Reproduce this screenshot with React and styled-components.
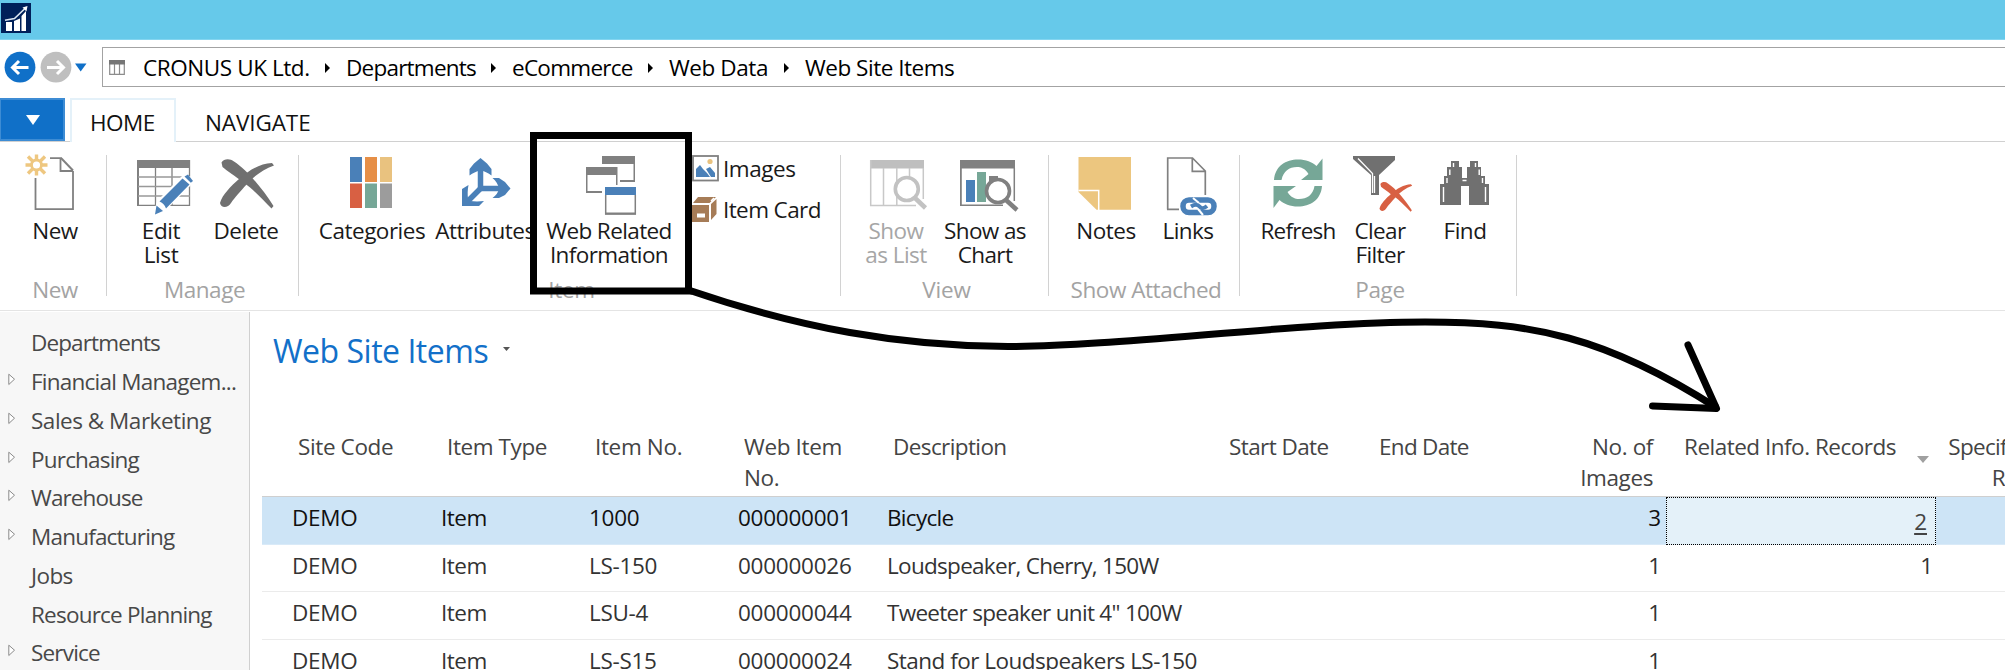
import React from "react";
import styled, { createGlobalStyle } from "styled-components";

const GlobalStyle = createGlobalStyle`
  *, *::before, *::after { box-sizing: border-box; }
  body { margin: 0; overflow: hidden; background: #fff; }
`;

const Window = styled.div`
  position: relative;
  width: 2005px;
  height: 670px;
  overflow: hidden;
  display: flex;
  flex-direction: column;
  background: #fff;
  color: #1a1a1a;
  font: 22.5px/24px "Open Sans", "Noto Sans", sans-serif;
  white-space: nowrap;
`;

const Text = styled.span`
  letter-spacing: ${(p) => p.$ls ?? -0.5}px;
`;

/* ---------- title and navigation bars ---------- */

const TitleBar = styled.header`
  height: 40px;
  flex: none;
  padding: 3px 1px;
  background: #66c9ea;
  border-bottom: 1px solid #84d5f0;
`;

const NavBar = styled.nav`
  height: 58px;
  flex: none;
  display: flex;
  align-items: flex-start;
  padding-top: 7px;
`;

const NavButtons = styled.div`
  width: 102px;
  height: 40px;
  display: flex;
`;

const AddressBox = styled.div`
  flex: 1;
  height: 40px;
  display: flex;
  align-items: center;
  border: 1.5px solid #a3a3a3;
  border-right: 0;
  padding: 2px 0 0 6px;
  color: #000;
  > svg { margin-top: -1px; }
`;

const Crumb = styled.div`
  width: ${(p) => p.$w}px;
  display: flex;
  align-items: center;
  justify-content: space-between;
  padding-right: 16px;
`;

const CrumbGap = styled.span`
  width: 18px;
`;

/* ---------- ribbon ---------- */

const TabRow = styled.div`
  height: 44px;
  flex: none;
  display: flex;
  border-bottom: 1px solid #d0d0d0;
`;

const FileTab = styled.div`
  width: 65px;
  height: 43px;
  display: flex;
  align-items: center;
  justify-content: center;
  padding: 1px 0 0 2px;
  background: #1070c8;
  border: 2px solid #3d8cd4;
  border-left-width: 1px;
`;

const Tab = styled.div`
  width: ${(p) => p.$w}px;
  height: ${(p) => (p.$active ? 44 : 43)}px;
  margin-left: ${(p) => p.$gap}px;
  padding: 11px 0 0 18px;
  background: #fff;
  border: 2px solid ${(p) => (p.$active ? "#e4f1f9" : "transparent")};
  border-bottom: 0;
  color: #111;
`;

const Ribbon = styled.div`
  height: 169px;
  flex: none;
  display: flex;
  border-bottom: 1px solid #e4e4e4;
`;

const Group = styled.section`
  width: ${(p) => p.$w}px;
  height: 154px;
  display: flex;
  flex-direction: column;
  justify-content: space-between;
  background: linear-gradient(#d2d2d2, #d2d2d2) right 13px / 1px 141px no-repeat;
`;

const GroupBody = styled.div`
  display: flex;
  padding: 8px 0 0 ${(p) => p.$pad}px;
`;

const Caption = styled.div`
  height: 24px;
  margin-bottom: -6px;
  padding-left: 3px;
  text-align: center;
  color: #a3a3a3;
`;

const BigButton = styled.div`
  width: ${(p) => p.$w}px;
  display: flex;
  flex-direction: column;
  align-items: center;
  color: ${(p) => (p.$disabled ? "#a6a6a6" : "#1a1a1a")};
  svg { display: block; flex: none; overflow: visible; margin-bottom: 1px; }
`;

const SmallList = styled.div`
  margin: -3px 0 0 11px;
  display: flex;
  flex-direction: column;
`;

const SmallButton = styled.div`
  height: 41px;
  display: flex;
  align-items: center;
  gap: 4px;
  padding-top: 2px;
  svg { display: block; margin-top: -1px; }
`;

/* ---------- body ---------- */

const Body = styled.div`
  flex: 1;
  display: flex;
  min-height: 0;
`;

const Sidebar = styled.aside`
  width: 250px;
  flex: none;
  padding-top: 12px;
  margin-top: 1px;
  overflow: hidden;
  background: #f7f7f7;
  border-right: 1px solid #d0d0d0;
  color: #484848;
`;

const SideRow = styled.div`
  height: 38.75px;
  display: flex;
  align-items: center;
`;

const Twisty = styled.span`
  width: 31px;
  height: 14px;
  padding-left: 8px;
  margin-top: -4px;
  svg { display: block; }
`;

const Main = styled.main`
  flex: 1;
  min-width: 0;
  overflow: hidden;
  padding-left: 12px;
`;

const PageTitle = styled.h1`
  margin: 0;
  height: 120px;
  padding: 20px 0 0 11px;
  display: flex;
  gap: 15px;
  font-size: 32px;
  font-weight: 400;
  line-height: 40px;
  color: #1270c9;
  svg { margin-top: 16px; }
`;

const columns = "25px 149px 148px 149px 149px 336px 150px 149px 149px 270px 149px";

const HeaderRow = styled.div`
  display: grid;
  grid-template-columns: ${columns};
  height: 66px;
  border-bottom: 1px solid #cfcfcf;
  line-height: 31px;
  color: #444;
`;

const HeadCell = styled.div`
  display: flex;
  flex-direction: column;
  align-items: ${(p) => (p.$right ? "flex-end" : "flex-start")};
  padding: 0 ${(p) => (p.$right ? 13 : 0)}px 0 ${(p) => (p.$right ? 0 : 11)}px;
`;

const SortedHead = styled.div`
  display: flex;
  justify-content: space-between;
  padding: 0 7px 0 18px;
  svg { margin-top: 25px; }
`;

const Row = styled.div`
  display: grid;
  grid-template-columns: ${columns};
  height: 47.5px;
  background: ${(p) => (p.$selected ? "#cde4f6" : "#fff")};
  border-bottom: 1px solid ${(p) => (p.$selected ? "#d9eaf8" : "#ebebeb")};
  color: ${(p) => (p.$selected ? "#111" : "#333")};
  line-height: 42px;
`;

const Cell = styled.div`
  padding: 0 ${(p) => (p.$last ? 3 : 5)}px 0 5px;
  text-align: ${(p) => (p.$right ? "right" : "left")};
`;

const FocusCell = styled.div`
  height: 47.5px;
  padding: 3px 8px 0 0;
  text-align: right;
  color: #444;
  background: #e4f1f9;
  border: 1px dotted #000;
  text-decoration: underline;
  text-decoration-thickness: 1.5px;
  text-underline-offset: 3px;
`;

const Annotation = styled.svg`
  position: absolute;
  inset: 0;
  pointer-events: none;
`;

/* ---------- icons ---------- */

/* Icon canvases share the window's coordinate system; cx is the button centre. */
const Canvas = ({ cx, children }) => (
  <svg width="60" height="68" viewBox={`${cx - 30} 150 60 68`} fill="none">{children}</svg>
);

const GREY = "#808080";
const BLUE = "#4a80b8";

const NewIcon = () => (
  <Canvas cx={55}>
    <path d="M35.5 178V209.2H73V171M50 158.2H62" stroke={GREY} strokeWidth="1.8" />
    <path d="M60.5 158V171H73" stroke={GREY} strokeWidth="1.8" />
    <path d="M61.5 158.5L73 170.5" stroke={GREY} strokeWidth="2" />
    <circle cx="36.5" cy="165" r="5" stroke="#eec780" strokeWidth="2.8" />
    <path d="M36.5 154.5V159M36.5 171V175.5M25.5 165H31M42 165H47.5M28 156.5L32.5 161M45 156.5L40.5 161M28 173.5L32.5 169M45 173.5L40.5 169" stroke="#eec780" strokeWidth="3.4" />
  </Canvas>
);

const EditListIcon = () => (
  <Canvas cx={161}>
    <rect x="137" y="160" width="53" height="8" fill={GREY} />
    <path d="M138 160V206" stroke={GREY} strokeWidth="2" />
    <path d="M189.5 160V206M155.5 168V206M172 168V206M138 205.3H190" stroke={GREY} strokeWidth="1.3" />
    <path d="M138 177H190M138 186.5H190M138 196H190" stroke="#999" strokeWidth="1.3" />
    <path d="M153 216L157 201L184 174L194 178L193 183L165 211Z" fill="#fff" />
    <path d="M159.5 201.500L182.500 178.500L189.500 184.500L166 208.500C165 205 162 202.500 159.500 201.500Z" fill={BLUE} />
    <path d="M155 214.500L156.500 205.500L163 211Z" fill={BLUE} />
    <path d="M184.500 176.500L188 174.500L193 181L190.800 182.800Z" fill={BLUE} />
  </Canvas>
);

const Cross = ({ fill }) => (
  <g fill={fill}>
    <path d="M221.500 162.500C224 158.500 230 158.500 234 161.500C247 170 262 188 273.500 206L271.500 208.500C262 199 254 190 243 182C236 177 226 170 222.500 167Z" />
    <path d="M220 203C222 195 231 186 239 179C249 170 260 163.500 272 163L274 165.500C263 169.500 254 176 247 184C240 192 235 197 231 203C228 208 221 208.500 220 203Z" />
  </g>
);

const DeleteIcon = () => (
  <Canvas cx={246}><Cross fill="#707070" /></Canvas>
);

const CategoriesIcon = () => (
  <Canvas cx={372}>
    <rect x="350" y="157" width="12" height="25" fill={BLUE} />
    <rect x="365" y="157" width="12" height="25" fill="#e68f47" />
    <rect x="380" y="157" width="12" height="25" fill="#e9c27f" />
    <rect x="350" y="183.500" width="12" height="24.500" fill="#d86043" />
    <rect x="365" y="183.500" width="12" height="24.500" fill="#76a797" />
    <rect x="380" y="183.500" width="12" height="24.500" fill="#9c9c9c" />
  </Canvas>
);

const AttributesIcon = () => (
  <Canvas cx={485}>
    <path d="M480.500 189V166M478 188.500H502" stroke={BLUE} strokeWidth="5.500" />
    <path d="M480.500 188.500L468 201" stroke={BLUE} strokeWidth="5.500" />
    <path d="M480.500 158L487 163.500L491.500 169V175.500C488 173 485.500 171.500 480.500 170.500C476 171.500 473 173 469.500 175.500V169L474 163.500Z" fill={BLUE} />
    <path d="M510.500 188.500L505 182L499 178H492.500C496 181 498 184 499 188.500C498 193 496 195.500 492.500 198H499L505 195Z" fill={BLUE} />
    <path d="M462 206V189L468.500 185C467.500 190 467.500 194.500 468 198.500L470 201C474 201.500 480 201.500 484 201L479 206Z" fill={BLUE} />
  </Canvas>
);

const RelatedIcon = () => (
  <Canvas cx={609}>
    <path d="M602 156H635V182H620V180H633.500V164H602Z" fill={GREY} />
    <path d="M586 167H617.500V185H616V175H587.500V191H602V193H586Z" fill={GREY} />
    <path d="M605.700 195V214H635.300V195" stroke={GREY} strokeWidth="1.500" />
    <path d="M605 213.500H636" stroke={GREY} strokeWidth="2" />
    <rect x="605" y="187" width="31" height="8" fill={BLUE} />
  </Canvas>
);

const ShowListIcon = () => (
  <Canvas cx={896}>
    <rect x="870" y="160" width="54" height="8.500" fill="#bfbfbf" />
    <path d="M870.700 160V206M923.300 168V199M883.500 168V206M896.800 168V206M909.500 168V177M870 205.500H916" stroke="#c8c8c8" strokeWidth="1.500" />
    <circle cx="906.800" cy="189" r="11.500" fill="#fff" stroke="#c2c2c2" strokeWidth="3.600" />
    <path d="M915 198L925.500 208" stroke="#c2c2c2" strokeWidth="4.500" />
  </Canvas>
);

const ShowChartIcon = () => (
  <Canvas cx={985}>
    <rect x="960" y="160" width="55" height="8.500" fill={GREY} />
    <path d="M960.900 160V206" stroke={GREY} strokeWidth="1.800" />
    <path d="M1014.300 168V201M960 205.300H1003" stroke={GREY} strokeWidth="1.500" />
    <rect x="966" y="180" width="9" height="22" fill={BLUE} />
    <rect x="977" y="172" width="9" height="30" fill="#76a797" />
    <rect x="989" y="176" width="9" height="14" fill={GREY} />
    <circle cx="998" cy="191" r="11.500" fill="#fff" stroke={GREY} strokeWidth="3.600" />
    <path d="M1006 200L1017 210" stroke={GREY} strokeWidth="4.500" />
  </Canvas>
);

const NotesIcon = () => (
  <Canvas cx={1106}>
    <path d="M1078.500 157H1131V209.700H1096.500L1078.500 192Z" fill="#ecc67f" />
    <path d="M1078.500 190.500H1098.700V210" stroke="#fff" strokeWidth="1.500" />
  </Canvas>
);

const LinksIcon = () => (
  <Canvas cx={1188}>
    <path d="M1167.700 209.500V158H1192.500L1205.300 171V195M1192.300 158V171.300H1205M1167 209.300H1179" stroke={GREY} strokeWidth="1.700" />
    <rect x="1183" y="200" width="31" height="12.500" rx="6" stroke={BLUE} strokeWidth="5.500" />
    <path d="M1193 198L1199 203M1198 209L1203 215" stroke="#fff" strokeWidth="2" />
    <path d="M1191 206.500C1195 204 1197.500 204 1199.500 206.500S1204 208.500 1207 206" stroke={BLUE} strokeWidth="4" />
  </Canvas>
);

const RefreshIcon = () => (
  <Canvas cx={1298}>
    <path d="M1274 180C1275 166 1286 159.500 1298 159.500C1306 159.500 1312 162 1316.500 166L1322.500 158.500V180H1301L1308.500 174C1305 168.500 1301 167 1297 167C1289 167 1283.500 171 1281.500 180Z" fill="#76a797" />
    <path d="M1322 186C1321 200 1310 206.500 1298 206.500C1290 206.500 1284 204 1279.500 200L1273.500 208V186H1296L1287.500 192C1291 197.500 1295 199 1299 199C1307 199 1313 195 1314.500 186Z" fill="#76a797" />
  </Canvas>
);

const ClearFilterIcon = () => (
  <Canvas cx={1380}>
    <path d="M1353 156H1395V160L1379 175V195H1371V175L1353 159Z" fill="#707070" />
    <path d="M1358 158.500L1372.500 173.500V193M1374.500 176V193" stroke="#fff" strokeWidth="1.300" />
    <g transform="translate(1379.500 182.500) scale(.605) translate(-220 -160)"><Cross fill="#d86043" /></g>
  </Canvas>
);

const FindIcon = () => (
  <Canvas cx={1465}>
    <path d="M1440 205V184H1444V176H1447V167H1451V161H1459V167H1462V178H1467V167H1470V161H1478V167H1481V176H1485V184H1489V205H1469V186H1461V205Z" fill="#707070" />
    <path d="M1443.500 187V202M1447 178V183M1449.800 169.500V175M1453.500 163V167M1485.500 187V202M1482.500 178V183M1479.200 169.500V175M1475.500 163V167M1462.500 180.500H1466.500" stroke="#fff" strokeWidth="1.400" />
  </Canvas>
);

const ImagesIcon = () => (
  <svg width="27" height="27" viewBox="0 0 27 27">
    <rect x="1" y="1" width="25" height="24.500" fill="#fff" stroke={GREY} strokeWidth="1.800" />
    <circle cx="18" cy="6.500" r="2.600" fill="#e9c27f" />
    <path d="M4 22V14L8 10L11 14L15 18L18 22ZM14 14L18 12L23 18V22H19Z" fill={BLUE} />
  </svg>
);

const ItemCardIcon = () => (
  <svg width="27" height="27" viewBox="0 0 27 27">
    <path d="M0 9H17V26H0ZM1 7L6 1H24L17.500 7ZM19 8L24.500 3V18L19 24Z" fill="#a67c57" />
    <path d="M19 5L22 2" stroke="#fff" strokeWidth="1.500" />
    <rect x="5" y="17.500" width="8" height="4" fill="#fff" />
  </svg>
);

const Logo = () => (
  <svg width="30" height="30" viewBox="1 3 30 30" display="block">
    <rect x="1" y="3" width="30" height="30" fill="#00205a" />
    <path d="M6 22H12V31H6ZM14 21L20 18.500V31H14ZM21.500 16L26 11V31H21.500Z" fill="#fff" />
    <path d="M5 20.300L14.500 18.500L26 7.500" stroke="#dce6f2" strokeWidth="1.600" fill="none" />
    <path d="M22.500 7.500L27.500 6L26.500 11.500Z" fill="#fff" />
  </svg>
);

const NavIcons = () => (
  <svg width="102" height="40" viewBox="0 47 102 40" fill="none">
    <circle cx="20" cy="67.200" r="15.400" fill="#1070c8" />
    <circle cx="56" cy="67.200" r="15.400" fill="#bfbfbf" />
    <path d="M28.500 67.500H13.500M19 61L12.500 67.500L19 74M47 67.500H62.500M57 61L63.500 67.500L57 74" stroke="#fff" strokeWidth="3" />
    <path d="M75 63.500H86.500L80.700 71.500Z" fill="#1070c8" />
  </svg>
);

const PageIcon = () => (
  <svg width="16" height="15" viewBox="0 0 16 15">
    <path d="M.7 0V14.300H15.300V0M5.500 4V14M10.500 4V14" fill="none" stroke="#8c8c8c" strokeWidth="1.200" />
    <rect width="16" height="4.500" fill="#757575" />
  </svg>
);

const Triangle = ({ w, h, fill, right }) => (
  <svg width={w} height={h} viewBox="0 0 10 10" preserveAspectRatio="none">
    <path d={right ? "M0 0L10 5L0 10Z" : "M0 0H10L5 10Z"} fill={fill} />
  </svg>
);

/* ---------- data ---------- */

const crumbs = [
  ["CRONUS UK Ltd.", 203, -0.42],
  ["Departments", 166, -0.77],
  ["eCommerce", 157, -0.72],
  ["Web Data", 136, -0.42],
];

const groups = [
  { name: "New", w: 107, pad: 25, ls: -0.45, buttons: [[NewIcon, 60, ["New"], -0.45]] },
  { name: "Manage", w: 192, pad: 12, ls: -0.45, buttons: [[EditListIcon, 84, ["Edit", "List"], -0.4], [DeleteIcon, 86, ["Delete"], -0.5]] },
  {
    name: "Item", w: 542, pad: 12, ls: -0.3,
    buttons: [[CategoriesIcon, 122, ["Categories"], -0.5], [AttributesIcon, 104, ["Attributes"], -0.45], [RelatedIcon, 144, ["Web Related", "Information"], -0.6]],
    small: [[ImagesIcon, "Images", -0.45], [ItemCardIcon, "Item Card", -0.6]],
  },
  { name: "View", w: 208, pad: 10, ls: -0.2, buttons: [[ShowListIcon, 90, ["Show", "as List"], -0.55, true], [ShowChartIcon, 88, ["Show as", "Chart"], -0.6]] },
  { name: "Show Attached", w: 191, pad: 16, ls: -0.45, buttons: [[NotesIcon, 82, ["Notes"], -0.5], [LinksIcon, 82, ["Links"], -0.6]] },
  { name: "Page", w: 277, pad: 17, ls: -0.3, buttons: [[RefreshIcon, 82, ["Refresh"], -0.75], [ClearFilterIcon, 82, ["Clear", "Filter"], -0.65], [FindIcon, 88, ["Find"], -0.5]] },
];

const departments = [
  ["Departments", false, -0.87],
  ["Financial Managem...", true, -0.76],
  ["Sales & Marketing", true, -0.48],
  ["Purchasing", true, -0.8],
  ["Warehouse", true, -0.9],
  ["Manufacturing", true, -0.8],
  ["Jobs", false, -0.6],
  ["Resource Planning", false, -0.78],
  ["Service", true, -0.8],
];

const headers = [
  [["Site Code"], -0.38],
  [["Item Type"], -0.4],
  [["Item No."], -0.35],
  [["Web Item", "No."], -0.35],
  [["Description"], -0.6],
  [["Start Date"], -0.58],
  [["End Date"], -0.7],
  [["No. of", "Images"], -0.4, true],
];

const rows = [
  ["1000", "000000001", "Bicycle", -0.7, "3", "2"],
  ["LS-150", "000000026", "Loudspeaker, Cherry, 150W", -0.7, "1", "1"],
  ["LSU-4", "000000044", "Tweeter speaker unit 4\" 100W", -0.7, "1", ""],
  ["LS-S15", "000000024", "Stand for Loudspeakers LS-150", -0.52, "1", ""],
];

export default function App() {
  return (
    <Window>
      <GlobalStyle />
      <TitleBar><Logo /></TitleBar>
      <NavBar>
        <NavButtons><NavIcons /></NavButtons>
        <AddressBox>
          <PageIcon />
          <CrumbGap />
          {crumbs.map(([label, w, ls]) => (
            <Crumb key={label} $w={w}>
              <Text $ls={ls}>{label}</Text>
              <Triangle w={5} h={10} fill="#000" right />
            </Crumb>
          ))}
          <Text $ls={-0.48}>Web Site Items</Text>
        </AddressBox>
      </NavBar>

      <TabRow>
        <FileTab><Triangle w={14} h={10} fill="#fff" /></FileTab>
        <Tab $active $w={106} $gap={5}><Text $ls={-0.5}>HOME</Text></Tab>
        <Tab $w={140} $gap={9}><Text $ls={-0.1}>NAVIGATE</Text></Tab>
      </TabRow>
      <Ribbon>
        {groups.map((g) => (
          <Group key={g.name} $w={g.w}>
            <GroupBody $pad={g.pad}>
              {g.buttons.map(([Icon, w, lines, ls, disabled]) => (
                <BigButton key={lines[0]} $w={w} $disabled={disabled}>
                  <Icon />
                  {lines.map((line) => <Text key={line} $ls={ls}>{line}</Text>)}
                </BigButton>
              ))}
              {g.small && (
                <SmallList>
                  {g.small.map(([Icon, label, ls]) => (
                    <SmallButton key={label}><Icon /><Text $ls={ls}>{label}</Text></SmallButton>
                  ))}
                </SmallList>
              )}
            </GroupBody>
            <Caption><Text $ls={g.ls}>{g.name}</Text></Caption>
          </Group>
        ))}
      </Ribbon>

      <Body>
        <Sidebar>
          {departments.map(([label, expandable, ls]) => (
            <SideRow key={label}>
              <Twisty>
                {expandable && (
                  <svg width="8" height="13" viewBox="0 0 8 13">
                    <path d="M.8 1.200L6.500 6.200L.8 11.500Z" fill="#fff" stroke="#8a8a8a" />
                  </svg>
                )}
              </Twisty>
              <Text $ls={ls}>{label}</Text>
            </SideRow>
          ))}
        </Sidebar>
        <Main>
          <PageTitle>
            <Text $ls={-0.48}>Web Site Items</Text>
            <Triangle w={7} h={4} fill="#555" />
          </PageTitle>
          <HeaderRow>
            <span />
            {headers.map(([lines, ls, right]) => (
              <HeadCell key={lines[0]} $right={right}>
                {lines.map((line) => <Text key={line} $ls={ls}>{line}</Text>)}
              </HeadCell>
            ))}
            <SortedHead>
              <Text $ls={-0.5}>Related Info. Records</Text>
              <Triangle w={12} h={7} fill="#a0a0a0" />
            </SortedHead>
            <HeadCell $right>
              <Text $ls={-0.7}>Specification</Text>
              <Text $ls={-0.6}>Records</Text>
            </HeadCell>
          </HeaderRow>
          {rows.map(([no, webNo, description, ls, images, related], i) => (
            <Row key={no} $selected={i === 0}>
              <span />
              <Cell><Text $ls={-0.3}>DEMO</Text></Cell>
              <Cell><Text>Item</Text></Cell>
              <Cell><Text $ls={-0.3}>{no}</Text></Cell>
              <Cell><Text $ls={-0.25}>{webNo}</Text></Cell>
              <Cell><Text $ls={ls}>{description}</Text></Cell>
              <span />
              <span />
              <Cell $right>{images}</Cell>
              {i === 0 ? <FocusCell>{related}</FocusCell> : <Cell $right $last>{related}</Cell>}
            </Row>
          ))}
        </Main>
      </Body>

      <Annotation width="2005" height="670" viewBox="0 0 2005 670" fill="none" stroke="#000" strokeWidth="7">
        <rect x="533.500" y="135.500" width="155" height="155.500" />
        <path d="M690 290.500C800 328 900 346.500 1008 346.500C1120 346.500 1300 322 1425 322C1530 322 1605 336 1717 408" />
        <path d="M1688 345L1716.500 408.500L1652.500 406" strokeLinecap="round" strokeLinejoin="round" />
      </Annotation>
    </Window>
  );
}
